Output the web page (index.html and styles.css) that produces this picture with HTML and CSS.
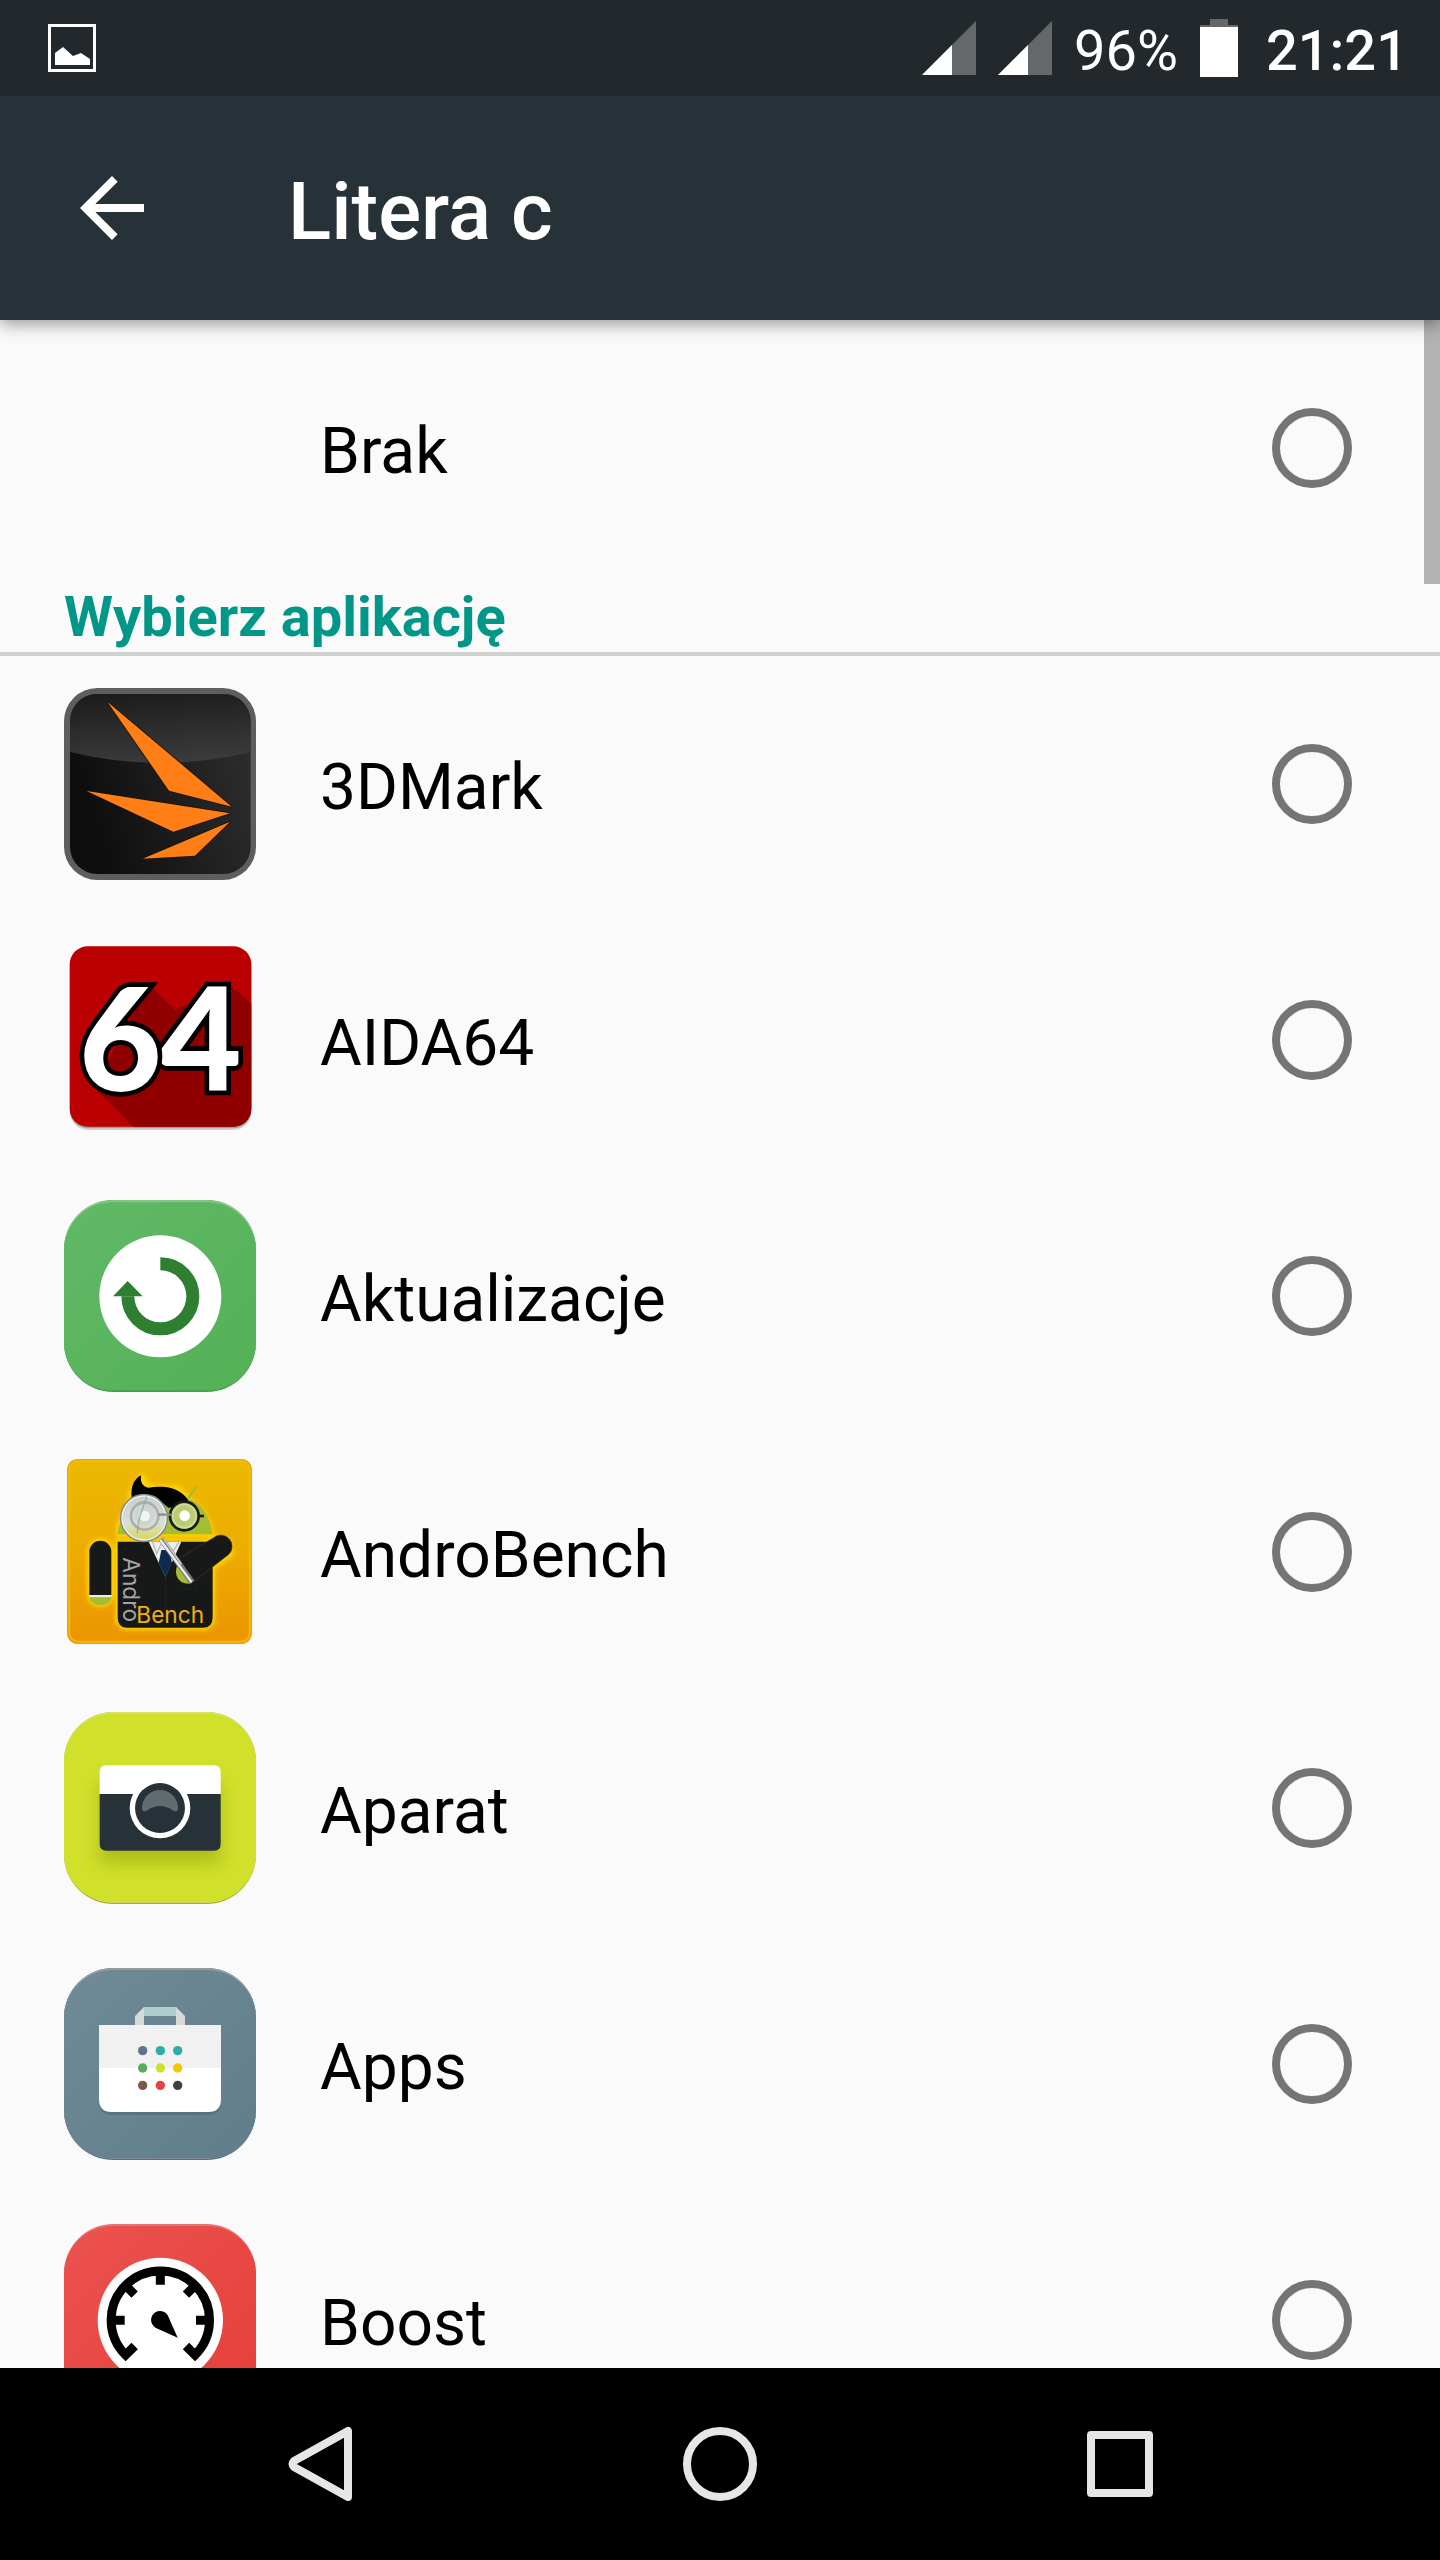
FILE: index.html
```html
<!DOCTYPE html>
<html lang="pl">

<head>
    <meta charset="UTF-8">
    <meta name="viewport" content="width=device-width, initial-scale=1.0">
    <title>Litera c</title>
    <link rel="stylesheet" href="styles.css">
</head>

<body>
    <div class="status">
        <svg class="picture" viewBox="0 0 48 48">
            <rect x="1.5" y="1.5" width="45" height="45" fill="none" stroke="#fff" stroke-width="3" />
            <path d="M7 41V29l8-6 10 9 8-3 9 6v6z" fill="#fff" />
        </svg>
        <div class="status-right">
            <svg class="signal" viewBox="0 0 54 54">
                <path d="M54 0v54H0z" fill="#64686a" />
                <path d="M30 24v30H0z" fill="#fff" />
            </svg>
            <svg class="signal" viewBox="0 0 54 54">
                <path d="M54 0v54H0z" fill="#64686a" />
                <path d="M30 24v30H0z" fill="#fff" />
            </svg>
            <span class="percent">96%</span>
            <svg class="battery" viewBox="0 0 38 58">
                <path d="M10 0h18v6h10v4H0V6h10z" fill="#64686a" />
                <path d="M0 8h38v50H0z" fill="#fff" />
            </svg>
            <span class="clock">21:21</span>
        </div>
    </div>

    <header class="toolbar">
        <button class="back" aria-label="Wstecz">
            <svg viewBox="0 0 24 24">
                <path d="M20 11H7.83l5.59-5.59L12 4l-8 8 8 8 1.41-1.41L7.83 13H20v-2z" fill="#fff" />
            </svg>
        </button>
        <h1>Litera c</h1>
    </header>

    <main class="list">
        <div class="scrollbar"></div>
        <label class="row">
            <span class="icon"></span>
            <span class="name">Brak</span>
            <input type="radio" name="app">
        </label>

        <h2>Wybierz aplikację</h2>

        <label class="row">
            <svg class="icon" viewBox="42 354 576 576">
                <defs>
                    <linearGradient id="mark" x1="0" x2="1" y1="0.3" y2="0">
                        <stop offset="0" stop-color="#0e0e0e" />
                        <stop offset="1" stop-color="#303030" />
                    </linearGradient>
                    <linearGradient id="gloss" x1="0.3" x2="0.5" y1="0" y2="1">
                        <stop offset="0" stop-color="#1c1c1b" />
                        <stop offset="1" stop-color="#3a3c3b" />
                    </linearGradient>
                </defs>
                <rect x="42" y="354" width="576" height="576" rx="100" fill="#5d5f5e" />
                <rect x="60" y="372" width="542" height="540" rx="82" fill="url(#mark)" />
                <path d="M60 546V454a82 82 0 0 1 82-82h378a82 82 0 0 1 82 82v92q-270 66-542 0z" fill="url(#gloss)" />
                <path d="M172 395l373 315-188-48zM110 663l430 67-170 55zM540 755L435 857l-157 9z" fill="#ff7f16" stroke="#1a1108" stroke-width="5" paint-order="stroke" />
            </svg>
            <span class="name">3DMark</span>
            <input type="radio" name="app">
        </label>

        <label class="row">
            <svg class="icon aida" viewBox="42 42 576 576">
                <rect x="60" y="54" width="544" height="546" rx="54" fill="#000" opacity="0.15" />
                <rect x="60" y="51" width="544" height="544" rx="54" fill="#000" opacity="0.25" />
                <rect x="59" y="49" width="545" height="541" rx="54" fill="#ba0000" />
                <path d="M297 165l78 75 165-75 64 55v316a54 54 0 0 1-54 54H250L130 470z" fill="#900000" />
                <text x="327" y="482">4</text>
                <text x="87" y="482">6</text>
            </svg>
            <span class="name">AIDA64</span>
            <input type="radio" name="app">
        </label>

        <label class="row">
            <svg class="icon" viewBox="42 30 576 576">
                <defs>
                    <linearGradient id="green" x1="0" x2="1" y1="0" y2="1">
                        <stop offset="0" stop-color="#61b966" />
                        <stop offset="1" stop-color="#53b156" />
                    </linearGradient>
                </defs>
                <rect x="42" y="30" width="576" height="576" rx="148" fill="#489c4b" />
                <rect x="42" y="30" width="576" height="570" rx="148" fill="#85c588" />
                <rect x="42" y="37" width="576" height="564" rx="145" fill="url(#green)" />
                <circle cx="331" cy="319" r="183" fill="#fff" />
                <path d="M331 221.500a97.500 97.500 0 1 1-97.500 97.500" fill="none" stroke="#2f7f33" stroke-width="39" />
                <path d="M189 319l44-46 45 46z" fill="#2f7f33" />
            </svg>
            <span class="name">Aktualizacje</span>
            <input type="radio" name="app">
        </label>

        <label class="row">
            <svg class="icon bench" viewBox="42 33 576 576">
                <defs>
                    <linearGradient id="amber" x1="0" x2="0" y1="0" y2="1">
                        <stop offset="0" stop-color="#ecb900" />
                        <stop offset="0.5" stop-color="#ecac00" />
                        <stop offset="1" stop-color="#eb9500" />
                    </linearGradient>
                    <linearGradient id="lens" x1="0" x2="0" y1="0" y2="1">
                        <stop offset="0" stop-color="#c9cdcc" />
                        <stop offset="0.6" stop-color="#dbdfd9" />
                        <stop offset="1" stop-color="#d9d84a" />
                    </linearGradient>
                    <filter id="glow" x="-20%" y="-20%" width="140%" height="140%">
                        <feGaussianBlur stdDeviation="7" />
                    </filter>
                </defs>
                <rect x="53" y="44" width="551" height="551" rx="30" fill="url(#amber)" stroke="#eda21c" stroke-width="4" />
                <rect x="58" y="49" width="541" height="541" rx="27" fill="none" stroke="#f4bf00" stroke-width="5" />
                <!-- glow round the figure -->
                <g filter="url(#glow)" fill="#ffd500" stroke="#ffd500" stroke-width="14">
                    <rect x="118" y="287" width="66" height="192" rx="33" />
                    <path d="M204 268c4-40 12-60 30-75l12-60 30-40 20 32 90 5 40 40c30 20 55 60 58 98zM203 290h285v240l-20 18H220l-17-18zM394 350l96-72 48 10 5 40-115 82z" />
                </g>
                <!-- head -->
                <path d="M203 268c6-50 30-88 62-104h160c32 16 58 54 62 104z" fill="#a5bd32" />
                <path d="M415 160l22-33" stroke="#a5bd32" stroke-width="7" stroke-linecap="round" />
                <path d="M245 158c-4-30 6-56 28-67-2 18 2 34 22 37 34-6 76-4 102 18 14 11 22 24 24 38l-66 4-40-34z" fill="#000" />
                <!-- left arm and body -->
                <path d="M118 450V320a33 33 0 0 1 66 0v130z" fill="#171918" />
                <path d="M118 457h67c-4 32-62 32-67 0z" fill="#a5bd32" />
                <path d="M117 453h68" stroke="#f0ecd8" stroke-width="6" />
                <path d="M203 290h285v228q0 30-30 30H232q-29 0-29-30z" fill="#171918" />
                <path d="M296 290h98l-48 105z" fill="#efefed" />
                <path d="M308 292l12 34 13-28M386 292l-22 36-12-26" fill="none" stroke="#b5b8b8" stroke-width="4" />
                <path d="M334 315h24l8 40-20 40-20-40z" fill="#0d2b4c" />
                <path d="M347 395v140M388 432h54v-20" fill="none" stroke="#343635" stroke-width="2" stroke-dasharray="3 4" />
                <!-- right arm -->
                <path d="M388 340l103-62a33 33 0 0 1 43 52L428 412z" fill="#171918" stroke="#3c3b30" stroke-width="2" />
                <path d="M382 360c-14 34 10 62 42 55z" fill="#a5bd32" />
                <!-- glasses -->
                <circle cx="403" cy="213" r="43" fill="#bccc73" stroke="#171918" stroke-width="8" />
                <circle cx="403" cy="213" r="35" fill="none" stroke="#d3ddaa" stroke-width="4" />
                <circle cx="404" cy="212" r="16" fill="#fff" />
                <path d="M446 213h16" stroke="#171918" stroke-width="8" />
                <!-- magnifier -->
                <path d="M334 282l92 130" stroke="#77797a" stroke-width="18" />
                <path d="M331 285l94 127" stroke="#f1f1f1" stroke-width="7" />
                <path d="M340 280l54 78" stroke="#c6c8c9" stroke-width="5" />
                <circle cx="282" cy="219" r="69" fill="url(#lens)" stroke="#858989" stroke-width="7" />
                <circle cx="282" cy="219" r="66" fill="none" stroke="#f0f2f1" stroke-width="4" />
                <circle cx="284" cy="213" r="41" fill="none" stroke="#a9b0ae" stroke-width="8" />
                <circle cx="284" cy="213" r="30" fill="#cfd5d0" />
                <circle cx="284" cy="213" r="16" fill="#f2f3f3" />
                <path d="M290 154c-8 34-28 60-28 112" fill="none" stroke="#7ea4a5" stroke-width="4" opacity="0.7" />
                <path d="M325 209h24M353 209h10" stroke="#878d8b" stroke-width="7" />
                <text class="andro" transform="translate(219 337) rotate(90)">Andro</text>
                <text class="bench-word" x="259" y="533">Bench</text>
            </svg>
            <span class="name">AndroBench</span>
            <input type="radio" name="app">
        </label>

        <label class="row">
            <svg class="icon" viewBox="42 36 576 576">
                <defs>
                    <filter id="soft" x="-30%" y="-30%" width="160%" height="160%">
                        <feGaussianBlur stdDeviation="26" />
                    </filter>
                </defs>
                <rect x="42" y="36" width="576" height="576" rx="148" fill="#a3b322" />
                <rect x="42" y="36" width="576" height="572" rx="148" fill="#d9e466" />
                <rect x="42" y="41" width="576" height="565" rx="145" fill="#d0e02b" />
                <rect x="149" y="250" width="363" height="240" fill="#7d8900" opacity="0.4" filter="url(#soft)" />
                <path d="M149 282v-66q0-20 20-20h323q20 0 20 20v66z" fill="#fff" />
                <path d="M149 282h363v150q0 20-20 20H169q-20 0-20-20z" fill="#273238" />
                <circle cx="330" cy="324" r="91" fill="#fff" />
                <circle cx="330" cy="324" r="75" fill="#273238" />
                <path d="M276 324a54 54 0 0 1 108 0q0 14-14 8-40-28-80 0-14 6-14-8z" fill="#616a6f" />
            </svg>
            <span class="name">Aparat</span>
            <input type="radio" name="app">
        </label>

        <label class="row">
            <svg class="icon" viewBox="42 39 576 576">
                <defs>
                    <linearGradient id="slate" x1="0" x2="1" y1="0" y2="1">
                        <stop offset="0" stop-color="#708b97" />
                        <stop offset="1" stop-color="#607d8b" />
                    </linearGradient>
                </defs>
                <rect x="42" y="39" width="576" height="576" rx="148" fill="#546e8c" />
                <rect x="42" y="39" width="576" height="572" rx="148" fill="#979b9d" />
                <rect x="42" y="45" width="576" height="565" rx="145" fill="url(#slate)" />
                <path d="M147 220h366v222q0 38-38 38H185q-38 0-38-38z" fill="#4e6b7c" opacity="0.6" />
                <path d="M281 156h98v27h-98z" fill="#b0cdcd" />
                <path d="M255 210v-27l27-27v54zM405 210v-27l-27-27v54z" fill="#d9d9d9" />
                <path d="M147 210h366v223q0 38-38 38H185q-38 0-38-38z" fill="#fff" />
                <path d="M147 210h366v129H147z" fill="#f1f1f1" />
                <circle cx="278" cy="287" r="14" fill="#5f7390" />
                <circle cx="331" cy="287" r="14" fill="#2fabae" />
                <circle cx="383" cy="287" r="14" fill="#2fabae" />
                <circle cx="278" cy="339" r="14" fill="#52af57" />
                <circle cx="331" cy="339" r="14" fill="#cfdf2d" />
                <circle cx="383" cy="339" r="14" fill="#f3c800" />
                <circle cx="278" cy="391" r="14" fill="#7c594b" />
                <circle cx="331" cy="391" r="14" fill="#e8423e" />
                <circle cx="383" cy="391" r="14" fill="#404241" />
            </svg>
            <span class="name">Apps</span>
            <input type="radio" name="app">
        </label>

        <label class="row">
            <svg class="icon" viewBox="42 42 576 576">
                <defs>
                    <linearGradient id="red" x1="0" x2="1" y1="0" y2="1">
                        <stop offset="0" stop-color="#eb524f" />
                        <stop offset="1" stop-color="#e53f3a" />
                    </linearGradient>
                </defs>
                <rect x="42" y="42" width="576" height="576" rx="148" fill="#e27673" />
                <rect x="42" y="48" width="576" height="570" rx="145" fill="url(#red)" />
                <circle cx="331" cy="331" r="188" fill="#fff" />
                <path d="M254 408l-27 27a147.500 147.500 0 1 1 208 0l-27-27" fill="none" stroke="#000" stroke-width="27" />
                <path d="M331 180v44M184 331h40M438 331h40M227 227l27 27M435 227l-27 27" stroke="#000" stroke-width="27" />
                <path d="M383 383l-60-27a27 27 0 1 1 33-34q4 10 27 61z" fill="#000" />
            </svg>
            <span class="name">Boost</span>
            <input type="radio" name="app">
        </label>
    </main>

    <nav class="navbar">
        <button aria-label="Wstecz">
            <svg viewBox="0 0 80 80">
                <path d="M68 7v66L14 43q-3-3 0-6z" fill="none" stroke="#e6e6e6" stroke-width="8" stroke-linejoin="round" />
            </svg>
        </button>
        <button aria-label="Ekran główny">
            <svg viewBox="0 0 80 80">
                <circle cx="40" cy="40" r="33" fill="none" stroke="#e6e6e6" stroke-width="8" />
            </svg>
        </button>
        <button aria-label="Ostatnie aplikacje">
            <svg viewBox="0 0 80 80">
                <rect x="11" y="11" width="58" height="58" fill="none" stroke="#e6e6e6" stroke-width="8" stroke-linejoin="round" />
            </svg>
        </button>
    </nav>
</body>

</html>
```
FILE: styles.css
```css
* {
    box-sizing: border-box;
}

body {
    margin: 0;
    height: 100vh;
    display: flex;
    flex-direction: column;
    background-color: #fafafa;
    color: #000;
    font-family: Roboto, "Noto Sans", sans-serif;
}

svg {
    display: block;
}

button {
    display: flex;
    justify-content: center;
    align-items: center;
    padding: 0;
    border: none;
    background: none;
    cursor: pointer;
}

.status {
    flex: none;
    height: 96px;
    padding: 0 32px 0 48px;
    display: flex;
    justify-content: space-between;
    align-items: center;
    background-color: #23282c;
    color: #fff;
    font-size: 56px;
}

.picture {
    width: 48px;
    height: 48px;
}

.status-right {
    display: flex;
    align-items: center;
    gap: 22px;
}

.signal {
    width: 54px;
    height: 54px;
}

.battery {
    width: 38px;
    height: 58px;
}

.percent,
.clock {
    padding-top: 6px;
}

.clock {
    margin-left: 6px;
    font-weight: 500;
}

.toolbar {
    flex: none;
    height: 224px;
    padding: 0 64px;
    display: flex;
    align-items: center;
    gap: 128px;
    background-color: #273238;
    color: #fff;
    position: relative;
    z-index: 1;
    box-shadow: 0 4px 16px rgba(0, 0, 0, 0.4);
}

/* the toolbar shadow must not darken the status bar */
.status {
    position: relative;
    z-index: 2;
}

.back svg {
    width: 96px;
    height: 96px;
}

.toolbar h1 {
    margin: 0;
    padding-top: 8px;
    font-size: 80px;
    font-weight: 500;
}

.list {
    flex: 1;
    min-height: 0;
    overflow: hidden;
    position: relative;
}

.scrollbar {
    position: absolute;
    top: 0;
    right: 0;
    width: 16px;
    height: 264px;
    background-color: #b2b2b2;
}

.list h2 {
    margin: 0;
    padding: 6px 64px 0;
    border-bottom: 4px solid #d0d2d1;
    color: #009688;
    font-size: 56px;
    font-weight: 700;
    line-height: 70px;
}

.row {
    height: 256px;
    padding: 0 88px 0 64px;
    display: flex;
    align-items: center;
    gap: 64px;
}

.icon {
    flex: none;
    width: 192px;
    height: 192px;
}

.name {
    flex: 1;
    padding-top: 6px;
    font-size: 64px;
}

.row input {
    appearance: none;
    flex: none;
    width: 80px;
    height: 80px;
    margin: 0;
    border: 8px solid #757575;
    border-radius: 50%;
}

.row input:checked {
    border-color: #009688;
    background: radial-gradient(#009688 50%, transparent 52%);
}

.aida text {
    font-family: Lato, sans-serif;
    font-size: 428px;
    font-weight: 900;
    fill: #fff;
    stroke: #000;
    stroke-width: 28px;
    paint-order: stroke;
}

.bench text {
    font-family: Inter, sans-serif;
    font-size: 68px;
}

.bench .andro {
    fill: #a3a5a5;
}

.bench .bench-word {
    fill: #eeb111;
}

.navbar {
    flex: none;
    height: 192px;
    padding: 0 120px;
    display: flex;
    background-color: #000;
}

.navbar button {
    flex: 1;
}

.navbar svg {
    width: 80px;
    height: 80px;
}
```
